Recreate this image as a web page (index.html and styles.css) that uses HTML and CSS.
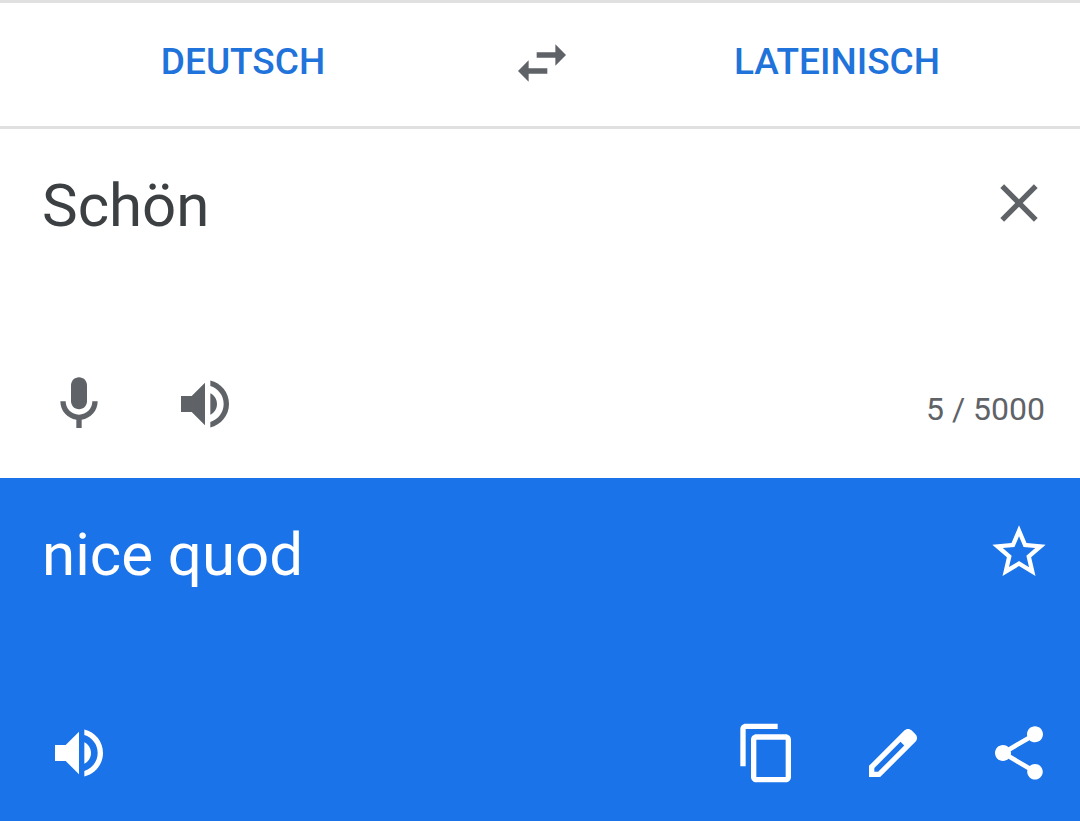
FILE: index.html
```html
<!DOCTYPE html>
<html lang="de">

<head>
    <meta charset="UTF-8">
    <meta name="viewport" content="width=device-width, initial-scale=1.0">
    <title>Übersetzer</title>
    <link rel="stylesheet" href="styles.css">
</head>

<body>
    <header class="languages">
        <button type="button" class="language">DEUTSCH</button>
        <button type="button" class="icon-button swap" aria-label="Sprachen tauschen">
            <svg viewBox="0 0 24 24"><path d="M6.99 11L3 15l3.99 4v-3H14v-2H6.99v-3zM21 9l-3.99-4v3H10v2h7.01v3L21 9z"/></svg>
        </button>
        <button type="button" class="language">LATEINISCH</button>
    </header>

    <main>
        <section class="panel source">
            <div class="text-row">
                <textarea class="text" id="sourceText" aria-label="Ausgangstext" maxlength="5000" rows="2" spellcheck="false">Schön</textarea>
                <button type="button" class="icon-button" aria-label="Text löschen">
                    <svg viewBox="0 0 24 24"><path d="M19 6.41L17.59 5 12 10.59 6.41 5 5 6.41 10.59 12 5 17.59 6.41 19 12 13.41 17.59 19 19 17.59 13.41 12z"/></svg>
                </button>
            </div>
            <div class="tools">
                <button type="button" class="icon-button" aria-label="Spracheingabe">
                    <svg viewBox="0 0 24 24"><path d="M12 14c1.66 0 3-1.34 3-3V5c0-1.66-1.34-3-3-3S9 3.34 9 5v6c0 1.66 1.34 3 3 3z"/><path d="M17 11c0 2.76-2.24 5-5 5s-5-2.24-5-5H5c0 3.53 2.61 6.43 6 6.92V21h2v-3.08c3.39-.49 6-3.39 6-6.92h-2z"/></svg>
                </button>
                <button type="button" class="icon-button" aria-label="Ausgangstext anhören">
                    <svg viewBox="0 0 24 24"><path d="M3 9v6h4l5 5V4L7 9H3zm13.5 3c0-1.77-1.02-3.29-2.5-4.03v8.05c1.48-.73 2.5-2.25 2.5-4.02zM14 3.23v2.06c2.89.86 5 3.54 5 6.71s-2.11 5.85-5 6.71v2.06c4.01-.91 7-4.49 7-8.77s-2.99-7.86-7-8.77z"/></svg>
                </button>
                <span class="counter">5 / 5000</span>
            </div>
        </section>

        <section class="panel target">
            <div class="text-row">
                <p class="text" lang="la">nice quod</p>
                <button type="button" class="icon-button" aria-label="Übersetzung speichern">
                    <svg viewBox="0 0 24 24"><path d="M22 9.24l-7.19-.62L12 2 9.19 8.63 2 9.24l5.46 4.73L5.82 21 12 17.27 18.18 21l-1.63-7.03L22 9.24zM12 15.4l-3.76 2.27 1-4.28-3.32-2.88 4.38-.38L12 6.1l1.71 4.04 4.38.38-3.32 2.88 1 4.28L12 15.4z"/></svg>
                </button>
            </div>
            <div class="tools">
                <button type="button" class="icon-button" aria-label="Übersetzung anhören">
                    <svg viewBox="0 0 24 24"><path d="M3 9v6h4l5 5V4L7 9H3zm13.5 3c0-1.77-1.02-3.29-2.5-4.03v8.05c1.48-.73 2.5-2.25 2.5-4.02zM14 3.23v2.06c2.89.86 5 3.54 5 6.71s-2.11 5.85-5 6.71v2.06c4.01-.91 7-4.49 7-8.77s-2.99-7.86-7-8.77z"/></svg>
                </button>
                <div class="actions">
                    <button type="button" class="icon-button" aria-label="Kopieren">
                        <svg viewBox="0 0 24 24"><path d="M16 1H4c-1.1 0-2 .9-2 2v14h2V3h12V1zm3 4H8c-1.1 0-2 .9-2 2v14c0 1.1.9 2 2 2h11c1.1 0 2-.9 2-2V7c0-1.1-.9-2-2-2zm0 16H8V7h11v14z"/></svg>
                    </button>
                    <button type="button" class="icon-button" aria-label="Bearbeiten">
                        <svg viewBox="0 0 24 24"><path d="M20.41 4.94l-1.35-1.35c-.78-.78-2.05-.78-2.83 0L3 16.82V21h4.18L20.41 7.77c.79-.78.79-2.05 0-2.83zM6.41 19.06L5 19v-1.36l9.82-9.82 1.41 1.41-9.82 9.83z"/></svg>
                    </button>
                    <button type="button" class="icon-button" aria-label="Teilen">
                        <svg viewBox="0 0 24 24"><path d="M18 16.08c-.76 0-1.44.3-1.96.77L8.91 12.7c.05-.23.09-.46.09-.7s-.04-.47-.09-.7l7.05-4.11c.54.5 1.25.81 2.04.81 1.66 0 3-1.34 3-3s-1.34-3-3-3-3 1.34-3 3c0 .24.04.47.09.7L8.04 9.81C7.5 9.31 6.79 9 6 9c-1.66 0-3 1.34-3 3s1.34 3 3 3c.79 0 1.5-.31 2.04-.81l7.12 4.16c-.05.21-.08.43-.08.65 0 1.61 1.31 2.92 2.92 2.92s2.92-1.31 2.92-2.92-1.31-2.92-2.92-2.92z"/></svg>
                    </button>
                </div>
            </div>
        </section>
    </main>
</body>

</html>
```
FILE: styles.css
```css
* {
    box-sizing: border-box;
}

body {
    display: flex;
    flex-direction: column;
    min-height: 100vh;
    margin: 0;
    font-family: Roboto, "Liberation Sans", sans-serif;
    color: #5f6368;
    background-color: #fff;
}

button {
    padding: 0;
    border: none;
    background: none;
    font-family: inherit;
    color: inherit;
    cursor: pointer;
}

main {
    display: flex;
    flex-direction: column;
    flex: 1;
}

.languages {
    display: flex;
    align-items: center;
    padding-bottom: 3px;
    border-top: 3px solid #e0e0e0;
    border-bottom: 3px solid #e0e0e0;
}

.language {
    flex: 1;
    padding: 38px 0 40px;
    font-size: 37px;
    font-weight: 500;
    line-height: 42px;
    color: #1f73da;
}

.icon-button {
    flex: none;
    width: 64px;
    height: 64px;
}

.icon-button svg {
    display: block;
    width: 100%;
    height: 100%;
    fill: currentColor;
}

.swap {
    margin: 0 20px 0 24px;
}

.panel {
    padding: 42px 29px 42px 42px;
}

.target {
    flex: 1;
    padding-bottom: 36px;
    color: #fff;
    background-color: #1a73e8;
}

.text-row {
    display: flex;
    align-items: flex-start;
    min-height: 201px;
}

.text {
    flex: 1;
    min-width: 0;
    margin: 0;
    padding: 0;
    border: none;
    outline: none;
    resize: none;
    background: none;
    font-family: inherit;
    font-size: 60px;
    line-height: 70px;
}

.source .text {
    color: #3c4043;
}

.tools {
    display: flex;
    align-items: center;
    gap: 62px;
    padding-left: 5px;
}

.counter {
    margin-left: auto;
    padding: 10px 6px 0 0;
    font-size: 32px;
    line-height: 36px;
}

.actions {
    display: flex;
    gap: 62px;
    margin-left: auto;
}
```
